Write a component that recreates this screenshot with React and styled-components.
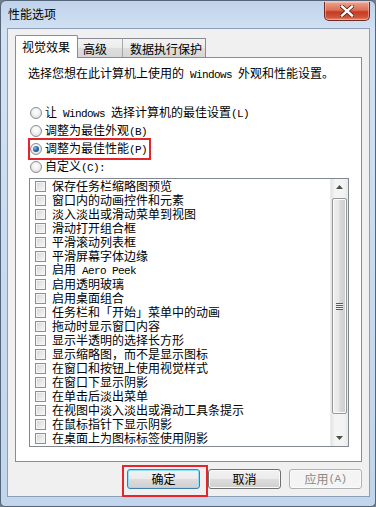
import React from "react";
import styled, { createGlobalStyle, css } from "styled-components";

const GlobalStyle = createGlobalStyle`
  html, body {
    margin: 0;
    padding: 0;
    background: #6f7d8c;
  }
  body {
    font-family: "Noto Sans CJK SC", "Noto Sans", sans-serif;
    font-size: 12px;
    color: #000;
  }
`;

// Latin glyphs in the dialog are half-width, like SimSun
const Mono = styled.span`
  font-family: "Liberation Mono", "DejaVu Sans Mono", monospace;
  font-size: 11px;
  letter-spacing: -0.6px;
`;

const Window = styled.div`
  width: 376px;
  height: 507px;
  box-sizing: border-box;
  border: 1px solid #55657a;
  border-radius: 6px 6px 5px 5px;
  background: linear-gradient(180deg, #bfd3ea 0%, #d3e2f3 6%, #cadcef 45%, #c1d5ec 100%);
  padding: 0 5px 9px 6px;
  display: flex;
  flex-direction: column;
  overflow: hidden;
`;

const TitleBar = styled.div`
  height: 27px;
  display: flex;
  align-items: flex-start;
  justify-content: space-between;
`;

const Title = styled.div`
  padding: 5px 0 0 1px;
  font-size: 12px;
  line-height: 16px;
  color: #000;
`;

const CloseButton = styled.div`
  width: 46px;
  height: 19px;
  margin-top: 1px;
  box-sizing: border-box;
  border: 1px solid #6e2a20;
  border-top: none;
  border-radius: 0 0 5px 5px;
  background: linear-gradient(180deg, #eba391 0%, #dc6f55 45%, #c63b22 55%, #d0543a 85%, #e78c73 100%);
  box-shadow: inset 0 0 0 1px rgba(255, 220, 210, 0.45);
  display: flex;
  align-items: center;
  justify-content: center;
`;

const Client = styled.div`
  flex: 1;
  box-sizing: border-box;
  background: #f0f0f0;
  border: 1px solid #8c9fb6;
  padding: 6px 7px 7px 7px;
  display: flex;
  flex-direction: column;
`;

const TabRow = styled.div`
  height: 22px;
  display: flex;
  align-items: flex-end;
  position: relative;
  z-index: 1;
`;

const Tab = styled.div`
  box-sizing: border-box;
  width: ${(p) => p.$w}px;
  padding-left: ${(p) => p.$pl}px;
  border: 1px solid #898c95;
  border-bottom: none;
  display: flex;
  align-items: center;
  line-height: 14px;
  ${(p) =>
    p.$active
      ? css`
          height: 23px;
          margin-bottom: -1px;
          background: #fff;
          border-radius: 2px 2px 0 0;
        `
      : css`
          height: 19px;
          margin-left: -1px;
          padding-top: 2px;
          background: linear-gradient(180deg, #f3f3f3 0%, #ebebeb 50%, #dedede 51%, #d6d6d6 100%);
          border-left-color: ${p.$first ? "#898c95" : "#a5a8ae"};
        `}
`;

const Panel = styled.div`
  height: 405px;
  box-sizing: border-box;
  background: #fff;
  border: 1px solid #898c95;
  padding: 8px 12px 0 13px;
  display: flex;
  flex-direction: column;
`;

const Description = styled.div`
  height: 14px;
  line-height: 14px;
  margin-left: -1px;
`;

const RadioGroup = styled.div`
  margin: 24px 0 2px 1px;
  display: flex;
  flex-direction: column;
`;

const RadioRow = styled.div`
  height: 18px;
  width: fit-content;
  padding-right: 2px;
  display: flex;
  align-items: center;
  gap: 3px;
  line-height: 14px;
  outline: ${(p) => (p.$marked ? "2px solid #e3262c" : "none")};
`;

const RadioCircle = styled.span`
  width: 12px;
  height: 12px;
  box-sizing: border-box;
  border-radius: 50%;
  border: 1px solid #8b8d8f;
  background: radial-gradient(circle at 50% 40%, #ffffff 0%, #f1f1f1 45%, #cfcfcf 100%);
  display: flex;
  align-items: center;
  justify-content: center;
  flex-shrink: 0;

  &::after {
    content: "";
    width: 6px;
    height: 6px;
    border-radius: 50%;
    background: radial-gradient(circle at 35% 35%, #8fc1ea 0%, #2d6aa8 45%, #163b66 100%);
    display: ${(p) => (p.$checked ? "block" : "none")};
  }
`;

const ListBox = styled.div`
  height: 269px;
  box-sizing: border-box;
  border: 1px solid #828790;
  display: flex;
`;

const Items = styled.div`
  flex: 1;
  display: flex;
  flex-direction: column;
`;

const Item = styled.div`
  height: 14px;
  display: flex;
  align-items: center;
  padding-left: 5px;
  gap: 6px;
  line-height: 14px;
  white-space: nowrap;
`;

const CheckBox = styled.span`
  width: 11px;
  height: 11px;
  box-sizing: border-box;
  border: 1px solid #8f8f8f;
  background: linear-gradient(135deg, #d4d4d4 0%, #e6e6e6 45%, #f8f8f8 100%);
  box-shadow: inset 0 0 0 1px #f4f4f4;
  flex-shrink: 0;
`;

const ScrollBar = styled.div`
  width: 17px;
  display: flex;
  flex-direction: column;
  background: linear-gradient(90deg, #e4e4e4 0%, #f5f5f5 25%, #f3f3f3 75%, #e8e8e8 100%);
  border-left: 1px solid #ececec;
`;

const Arrow = styled.div`
  height: 17px;
  display: flex;
  align-items: center;
  justify-content: center;
`;

const Thumb = styled.div`
  height: 217px;
  margin: 2px 1px 15px 1px;
  box-sizing: border-box;
  border: 1px solid #979797;
  border-radius: 2px;
  background: linear-gradient(90deg, #f2f2f2 0%, #e6e6e6 45%, #d8d8d8 55%, #cdcdcd 100%);
  box-shadow: inset 0 0 0 1px #fafafa;
  display: flex;
  align-items: center;
  justify-content: center;
`;

const Grip = styled.div`
  width: 7px;
  height: 7px;
  background: repeating-linear-gradient(180deg, #5a5a5a 0 1px, #f2f2f2 1px 2px);
`;

const ButtonRow = styled.div`
  margin-top: 7px;
  display: flex;
  justify-content: flex-end;
  gap: 8px;
`;

const Button = styled.div`
  position: relative;
  width: 73px;
  height: 20px;
  box-sizing: border-box;
  border: 1px solid ${(p) => (p.$disabled ? "#adb2b5" : p.$default ? "#3c7fb1" : "#707070")};
  border-radius: 3px;
  background: ${(p) =>
    p.$disabled
      ? "#f4f4f4"
      : "linear-gradient(180deg, #f2f2f2 0%, #ebebeb 50%, #dddddd 51%, #cfcfcf 100%)"};
  box-shadow: ${(p) => (p.$default ? "inset 0 0 0 1px #8fe0fb" : "inset 0 0 0 1px #fbfbfb")};
  color: ${(p) => (p.$disabled ? "#8a8a8a" : "#000")};
  display: flex;
  align-items: center;
  justify-content: center;
  line-height: 14px;

  ${(p) =>
    p.$marked &&
    css`
      &::after {
        content: "";
        position: absolute;
        left: -6px;
        top: -5px;
        right: -9px;
        bottom: -9px;
        border: 2px solid #e3262c;
      }
    `}
`;

const effects = [
  "保存任务栏缩略图预览",
  "窗口内的动画控件和元素",
  "淡入淡出或滑动菜单到视图",
  "滑动打开组合框",
  "平滑滚动列表框",
  "平滑屏幕字体边缘",
  <>启用<Mono> Aero Peek</Mono></>,
  "启用透明玻璃",
  "启用桌面组合",
  "任务栏和「开始」菜单中的动画",
  "拖动时显示窗口内容",
  "显示半透明的选择长方形",
  "显示缩略图，而不是显示图标",
  "在窗口和按钮上使用视觉样式",
  "在窗口下显示阴影",
  "在单击后淡出菜单",
  "在视图中淡入淡出或滑动工具条提示",
  "在鼠标指针下显示阴影",
  "在桌面上为图标标签使用阴影",
];

const options = [
  { label: <>让<Mono> Windows </Mono>选择计算机的最佳设置<Mono>(L)</Mono></> },
  { label: <>调整为最佳外观<Mono>(B)</Mono></> },
  { label: <>调整为最佳性能<Mono>(P)</Mono></>, checked: true },
  { label: <>自定义<Mono>(C):</Mono></> },
];

export default function App() {
  return (
    <>
      <GlobalStyle />
      <Window>
        <TitleBar>
          <Title>性能选项</Title>
          <CloseButton>
            <svg width="14" height="12" viewBox="0 0 14 12">
              <path d="M2 1.5 L12 10.5 M12 1.5 L2 10.5" stroke="#5a1d14" strokeWidth="4" strokeLinecap="square" />
              <path d="M2 1.5 L12 10.5 M12 1.5 L2 10.5" stroke="#fff" strokeWidth="2.4" strokeLinecap="square" />
            </svg>
          </CloseButton>
        </TitleBar>
        <Client>
          <TabRow>
            <Tab $active $w={63} $pl={6}>视觉效果</Tab>
            <Tab $first $w={46} $pl={5}>高级</Tab>
            <Tab $w={84} $pl={7}>数据执行保护</Tab>
          </TabRow>
          <Panel>
            <Description>
              选择您想在此计算机上使用的<Mono> Windows </Mono>外观和性能设置。
            </Description>
            <RadioGroup>
              {options.map((o, i) => (
                <RadioRow key={i} $marked={o.checked}>
                  <RadioCircle $checked={o.checked} />
                  <span>{o.label}</span>
                </RadioRow>
              ))}
            </RadioGroup>
            <ListBox>
              <Items>
                {effects.map((e, i) => (
                  <Item key={i}>
                    <CheckBox />
                    <span>{e}</span>
                  </Item>
                ))}
              </Items>
              <ScrollBar>
                <Arrow>
                  <svg width="7" height="4" viewBox="0 0 7 4">
                    <path d="M0 4 L3.5 0 L7 4 Z" fill="#4d4d4d" />
                  </svg>
                </Arrow>
                <Thumb>
                  <Grip />
                </Thumb>
                <Arrow>
                  <svg width="7" height="4" viewBox="0 0 7 4">
                    <path d="M0 0 L3.5 4 L7 0 Z" fill="#4d4d4d" />
                  </svg>
                </Arrow>
              </ScrollBar>
            </ListBox>
          </Panel>
          <ButtonRow>
            <Button $default $marked>确定</Button>
            <Button>取消</Button>
            <Button $disabled>应用<Mono>(A)</Mono></Button>
          </ButtonRow>
        </Client>
      </Window>
    </>
  );
}
